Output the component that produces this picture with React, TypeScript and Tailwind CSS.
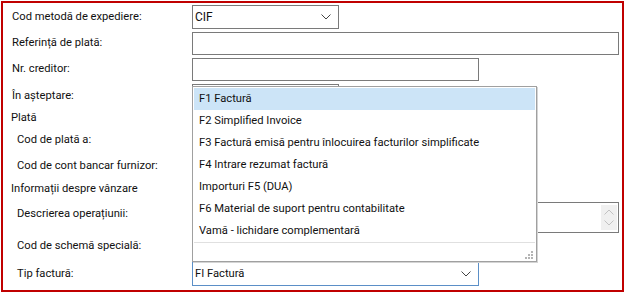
function Chevron({ className }: { className?: string }) {
  return (
    <svg className={className} width="10" height="6" viewBox="0 0 10 6" fill="none">
      <path d="M0.5 0.5 L5 5 L9.5 0.5" stroke="currentColor" strokeWidth="1" />
    </svg>
  )
}

const items = [
  'F1 Factură',
  'F2 Simplified Invoice',
  'F3 Factură emisă pentru înlocuirea facturilor simplificate',
  'F4 Intrare rezumat factură',
  'Importuri F5 (DUA)',
  'F6 Material de suport pentru contabilitate',
  'Vamă - lichidare complementară',
]

function Row({ label, indent, className, children }: { label: string; indent?: boolean; className: string; children?: React.ReactNode }) {
  return (
    <div className={`flex ${className}`}>
      <div className={`w-[180px] shrink-0 flex items-center ${indent ? 'pl-[5px]' : ''}`}>{label}</div>
      <div className="relative flex-1 flex items-center">{children}</div>
    </div>
  )
}

export default function App() {
  return (
    <div className="bg-white w-[626px] h-[294px] pt-px pl-px text-[11.2px] text-[#111]" style={{ fontFamily: 'Roboto, sans-serif' }}>
      <div className="relative w-[623px] h-[291px] border-2 border-[#c00000] pl-[9px]">
        {/* Cod metodă */}
        <Row label="Cod metodă de expediere:" className="mt-[2px] h-[24px]">
          <div className="w-[147px] h-[24px] border border-[#7a7a7a] flex items-center justify-between pl-[2px] pr-[7px]">
            <span className="text-[12px]">CIF</span>
            <Chevron className="text-[#444]" />
          </div>
        </Row>
        <Row label="Referință de plată:" className="mt-[3px] h-[23px]">
          <div className="w-[427px] h-[23px] border border-[#7a7a7a]" />
        </Row>
        <Row label="Nr. creditor:" className="mt-[3px] h-[23px]">
          <div className="w-[287px] h-[23px] border border-[#7a7a7a]" />
        </Row>
        <Row label="În așteptare:" className="mt-[3px] h-[24px]">
          <div className="w-[147px] h-[24px] border border-[#7a7a7a] self-start" />
          {/* open dropdown list */}
          <div className="absolute z-10 top-[2px] left-0 w-[345px] h-[176px] bg-white border border-[#a0a0a0] shadow-[1px_1px_0_#d4d4d4] flex flex-col pt-px px-px">
            {items.map((it, i) => (
              <div key={it} className={`h-[22px] shrink-0 flex items-center pl-[5px] ${i === 0 ? 'bg-[#cce4f7]' : ''}`}>
                {it}
              </div>
            ))}
            <div className="flex-1 border-t border-[#e0e0e0] flex items-end justify-end pr-[2px] pb-[2px]">
              <svg width="8" height="8" viewBox="0 0 8 8" fill="#b4b4b4">
                <rect x="6" y="0" width="2" height="2" />
                <rect x="3" y="3" width="2" height="2" />
                <rect x="6" y="3" width="2" height="2" />
                <rect x="0" y="6" width="2" height="2" />
                <rect x="3" y="6" width="2" height="2" />
                <rect x="6" y="6" width="2" height="2" />
              </svg>
            </div>
          </div>
        </Row>
        <div className="h-[21px] flex items-center -ml-px">Plată</div>
        <Row label="Cod de plată a:" indent className="mt-px h-[21px]" />
        <Row label="Cod de cont bancar furnizor:" indent className="mt-[5px] h-[21px]" />
        <div className="mt-[2px] h-[21px] flex items-center -ml-px">Informații despre vânzare</div>
        <div className="mt-[2px] flex h-[31px]">
          <div className="w-[180px] shrink-0 pl-[5px] pt-[4px]">Descrierea operațiunii:</div>
          <div className="w-[427px] h-[31px] border border-[#7a7a7a] flex justify-end pt-[2px] pr-[1px]">
            <div className="w-[16px] h-[25px] bg-[#f0f0f0] flex flex-col items-center justify-center gap-[5px] text-[#c2c2c2]">
              <Chevron className="rotate-180" />
              <Chevron />
            </div>
          </div>
        </div>
        <Row label="Cod de schemă specială:" indent className="mt-[3px] h-[21px]" />
        <Row label="Tip factură:" indent className="mt-[5px] h-[24px]">
          <div className="w-[287px] h-[24px] border border-[#5b8fc7] flex items-center justify-between pl-[2px] pr-[7px]">
            <span>FI Factură</span>
            <Chevron className="text-[#444]" />
          </div>
        </Row>
      </div>
    </div>
  )
}
